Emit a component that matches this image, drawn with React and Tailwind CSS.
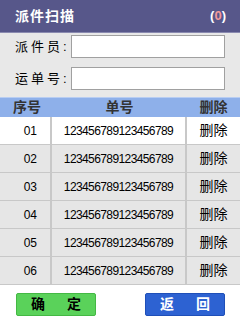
import React from 'react';

const rows = ['01', '02', '03', '04', '05', '06'];

const App = () => {
  return (
    <div
      className="w-[240px] h-[320px] bg-white flex flex-col overflow-hidden"
      style={{ fontFamily: '"Liberation Sans", "Noto Sans CJK SC", sans-serif' }}
    >
      <div className="h-[33px] bg-[#57578a] border-b border-[#8a8ab0] flex items-center justify-between pl-[15px] pr-[14px]">
        <span className="text-white font-bold text-[14px] tracking-[1px]">派件扫描</span>
        <span className="text-white font-bold text-[13px]">
          (<span className="text-[#f39a9a]">0</span>)
        </span>
      </div>

      <div className="bg-[#e8e8e8] h-[64px] flex flex-col gap-[9px] pt-[2px]">
        <div className="flex items-center h-[23px]">
          <span className="w-[71px] pl-[15px] text-[13px] text-black tracking-[3px] whitespace-nowrap">派件员:</span>
          <input className="w-[154px] h-[23px] bg-white border border-[#a0a0a0] outline-none" />
        </div>
        <div className="flex items-center h-[23px]">
          <span className="w-[71px] pl-[15px] text-[13px] text-black tracking-[3px] whitespace-nowrap">运单号:</span>
          <input className="w-[154px] h-[23px] bg-white border border-[#a0a0a0] outline-none" />
        </div>
      </div>

      <div className="h-[20px] bg-[#8eb0ea] border-t border-[#b8cdf2] flex items-center text-[14px] text-[#333] font-bold">
        <span className="w-[52px] text-center pl-[2px]">序号</span>
        <span className="w-[135px] text-center">单号</span>
        <span className="flex-1 text-center">删除</span>
      </div>

      {rows.map((n, i) => (
        <div
          key={n}
          className={`h-[28px] flex border-b border-[#c8c8c8] text-black ${i === 0 ? 'bg-white' : 'bg-[#e6e6e6]'}`}
        >
          <span className="w-[52px] flex items-center justify-end pr-[13px] text-[12px] border-r-2 border-[#c8c8c8]">{n}</span>
          <span className="w-[135px] flex items-center justify-center text-[12px] tracking-[-0.6px] border-r-2 border-[#c8c8c8]">123456789123456789</span>
          <span className="flex-1 flex items-center justify-center text-[14px]">删除</span>
        </div>
      ))}

      <div className="flex justify-between pl-[16px] pr-[15px] pt-[8px]">
        <button className="w-[80px] h-[23px] bg-[#5ad25a] border border-[#44b844] rounded-[2px] flex items-center justify-between px-[14px] text-[14px] font-bold text-black">
          <span>确</span>
          <span>定</span>
        </button>
        <button className="w-[80px] h-[23px] bg-[#2d62d2] border border-[#1f4fb8] rounded-[2px] flex items-center justify-between px-[14px] text-[14px] font-bold text-white">
          <span>返</span>
          <span>回</span>
        </button>
      </div>
    </div>
  );
};

export default App;
